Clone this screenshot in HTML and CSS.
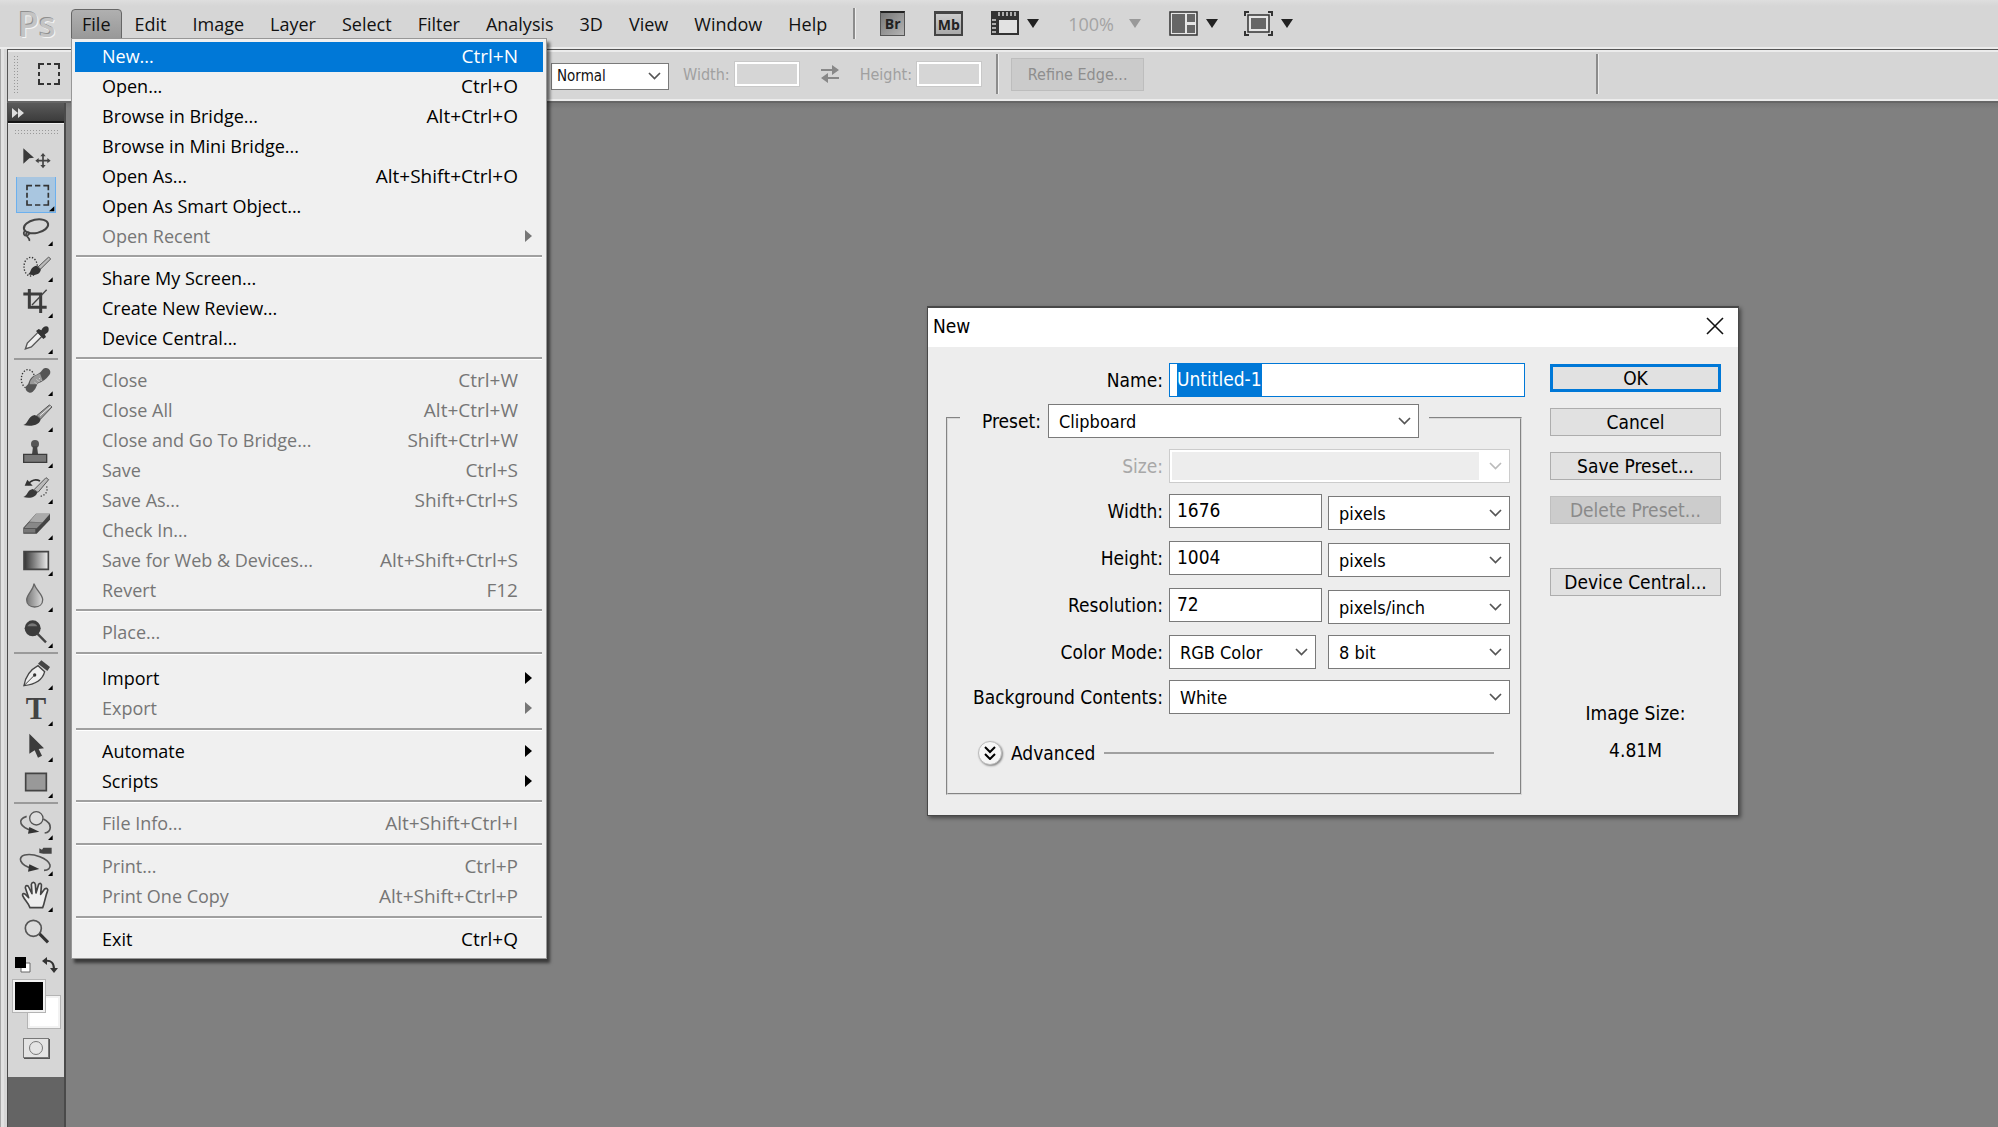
FILE: index.html
```html
<!DOCTYPE html>
<html lang="en">
<head>
<meta charset="utf-8">
<title>Ps</title>
<link rel="stylesheet" href="styles.css">
</head>
<body>
<div class="app">
  <header class="menubar">
    <div class="logo">Ps</div>
    <nav class="menus">
      <button class="menu-title open">File</button>
      <button class="menu-title">Edit</button>
      <button class="menu-title">Image</button>
      <button class="menu-title">Layer</button>
      <button class="menu-title">Select</button>
      <button class="menu-title">Filter</button>
      <button class="menu-title">Analysis</button>
      <button class="menu-title">3D</button>
      <button class="menu-title">View</button>
      <button class="menu-title">Window</button>
      <button class="menu-title">Help</button>
    </nav>
    <span class="bar-line"></span>
    <div class="app-buttons">
      <button class="badge bridge">Br</button>
      <button class="badge mini">Mb</button>
      <button class="drop">
        <svg width="28" height="25" viewBox="0 0 28 25"><path d="M0 0H28V24H0z" fill="#333"/><path d="M8 9H26V22H8z" fill="#e2e2e2"/><path d="M8 1v4M12 1v4M16 1v4M20 1v4M24 1v4M1 9h4M1 13h4M1 17h4M1 21h4" stroke="#d6d6d6" stroke-width="1.5"/></svg>
        <span class="tri"></span>
      </button>
      <button class="drop zoom" disabled>100% <span class="tri"></span></button>
      <button class="drop">
        <svg width="29" height="25" viewBox="0 0 29 25"><path d="M1 1H28V24H1z" fill="#e6e6e6" stroke="#333" stroke-width="1.5"/><path d="M3 3H16V22H3zM18 3H26V11H18zM18 14H26V22H18z" fill="#666"/></svg>
        <span class="tri"></span>
      </button>
      <button class="drop">
        <svg width="29" height="25" viewBox="0 0 29 25"><path d="M1 5V1H5M24 1H28V5M28 20V24H24M5 24H1V20" fill="none" stroke="#333" stroke-width="2"/><path d="M4 4H25V21H4z" fill="#e6e6e6" stroke="#333" stroke-width="1.5"/><path d="M7 7H22V18H7z" fill="#666"/></svg>
        <span class="tri"></span>
      </button>
    </div>
  </header>

  <div class="options">
    <span class="grip-v"></span>
    <div class="current-tool">
      <svg width="24" height="24" viewBox="0 0 24 24"><path d="M2 7V2H7M10 2H14M17 2H22V7M22 10V14M22 17V22H17M14 22H10M7 22H2V17M2 14V10" fill="none" stroke="#333" stroke-width="2"/></svg>
    </div>
    <select class="style-select" aria-label="Style"><option>Normal</option></select>
    <label class="opt-label" for="opt-w">Width:</label>
    <input class="opt-input" id="opt-w" type="text" disabled>
    <svg class="swap" width="20" height="18" viewBox="0 0 20 18"><path d="M1 5H14M6 13H19" stroke="#888" stroke-width="2"/><path d="M12 0L19 5L12 10zM8 8L1 13L8 18z" fill="#888"/></svg>
    <label class="opt-label" for="opt-h">Height:</label>
    <input class="opt-input" id="opt-h" type="text" disabled>
    <span class="bar-line"></span>
    <button class="refine" disabled>Refine Edge...</button>
    <span class="bar-line far"></span>
  </div>

  <div class="workspace">
    <aside class="dock">
      <div class="dock-head"><svg width="12" height="10" viewBox="0 0 12 10"><path d="M0 0L6 5L0 10zM6 0L12 5L6 10z" fill="#ddd"/></svg></div>
      <div class="tools">
        <span class="grip-h"></span>
        <div class="group">
          <button class="tool" aria-label="Move"><svg viewBox="0 0 120 108"><path d="M22 22L54 50L40 52L22 68z" fill="#3a3a3a"/><path d="M81 42V76M64 59H98" stroke="#444" stroke-width="5"/><path d="M81 36L89 46H73zM81 82L89 72H73zM58 59L68 51V67zM104 59L94 51V67z" fill="#444"/></svg></button>
          <button class="tool active" aria-label="Marquee"><svg viewBox="0 0 120 108"><path d="M33 40V26H48M57 26H73M82 26H97V40M97 47V62M97 70V84H82M73 84H57M48 84H33V70M33 62V47" fill="none" stroke="#333" stroke-width="5"/><path d="M115 88V103H99z"/></svg></button>
          <button class="tool" aria-label="Lasso"><svg viewBox="0 0 120 108"><ellipse cx="60" cy="40" rx="37" ry="20" transform="rotate(-12 60 40)" fill="none" stroke="#444" stroke-width="6"/><path d="M28 52C18 62 26 72 36 66C48 58 30 54 30 64C30 72 42 72 40 84" fill="none" stroke="#444" stroke-width="5"/><path d="M110 85V99H96z"/></svg></button>
          <button class="tool" aria-label="Quick selection"><svg viewBox="0 0 120 108"><ellipse cx="44" cy="53" rx="20" ry="28" fill="none" stroke="#333" stroke-width="4" stroke-dasharray="4 5"/><path d="M36 76C46 70 42 54 60 50L74 56C78 74 58 82 36 76z" fill="#333"/><path d="M66 54L98 24L104 30L74 60z" fill="#bbb" stroke="#555" stroke-width="3"/><path d="M110 85V99H96z"/></svg></button>
          <button class="tool" aria-label="Crop"><svg viewBox="0 0 120 108"><path d="M40 12V67H92M22 27H74V84" fill="none" stroke="#3c3c3c" stroke-width="9"/><path d="M48 60L92 14" stroke="#444" stroke-width="4"/><path d="M110 85V99H96z"/></svg></button>
          <button class="tool" aria-label="Eyedropper"><svg viewBox="0 0 120 108"><path d="M28 84L34 66L66 34L78 46L46 78z" fill="#eee" stroke="#555" stroke-width="4"/><path d="M60 30L68 24L76 28C82 12 100 12 98 26C98 36 88 38 86 40L90 48L82 54z" fill="#333"/><path d="M110 85V99H96z"/></svg></button>
        </div>
        <div class="group">
          <button class="tool" aria-label="Healing brush"><svg viewBox="0 0 120 108"><ellipse cx="36" cy="48" rx="20" ry="28" fill="none" stroke="#333" stroke-width="4" stroke-dasharray="4 5"/><path d="M42 76C54 66 48 56 60 50C74 46 80 42 90 28" fill="none" stroke="#555" stroke-width="26" stroke-linecap="round"/><path d="M52 64C52 54 60 48 76 42" fill="none" stroke="#999" stroke-width="22"/><path d="M56 58L64 64M62 50L70 56M70 46L76 52" stroke="#eee" stroke-width="3" stroke-dasharray="3 4"/><path d="M110 85V99H96z"/></svg></button>
          <button class="tool" aria-label="Brush"><svg viewBox="0 0 120 108"><path d="M22 78C38 74 34 52 56 48L74 56C76 78 46 84 22 78z" fill="#383838"/><path d="M62 50L100 18L108 24L74 60z" fill="#999" stroke="#555" stroke-width="3"/><path d="M72 50L104 22" stroke="#eee" stroke-width="3"/><path d="M110 85V99H96z"/></svg></button>
          <button class="tool" aria-label="Clone stamp"><svg viewBox="0 0 120 108"><circle cx="57" cy="27" r="12" fill="#555"/><path d="M51 34H63L66 58H48z" fill="#444"/><path d="M23 58H92V82H23z" fill="#777" stroke="#3c3c3c" stroke-width="4"/><path d="M110 85V99H96z"/></svg></button>
          <button class="tool" aria-label="History brush"><svg viewBox="0 0 120 108"><path d="M22 78C36 74 32 58 50 54L64 62C62 78 42 84 22 78z" fill="#383838"/><path d="M54 56L90 20L98 26L66 64z" fill="#bbb" stroke="#555" stroke-width="3"/><path d="M36 42C44 26 60 24 72 30" fill="none" stroke="#333" stroke-width="5"/><path d="M26 44L34 26L50 44z" fill="#333"/><path d="M92 46C96 60 90 72 74 76" fill="none" stroke="#444" stroke-width="4" stroke-dasharray="4 5"/><path d="M110 85V99H96z"/></svg></button>
          <button class="tool" aria-label="Eraser"><svg viewBox="0 0 120 108"><path d="M22 62L60 20H102V38L62 80H22z" fill="#444"/><path d="M40 44L60 20H102L80 46z" fill="#aaa"/><path d="M24 64L40 46H80L62 64z" fill="#888"/><path d="M24 66H58V77H24z" fill="#777"/><path d="M110 85V99H96z"/></svg></button>
          <button class="tool" aria-label="Gradient"><svg viewBox="0 0 120 108"><defs><linearGradient id="g1"><stop offset="0" stop-color="#333"/><stop offset="1" stop-color="#eee"/></linearGradient></defs><path d="M24 26H97V79H24z" fill="url(#g1)" stroke="#444" stroke-width="5"/><path d="M110 85V99H96z"/></svg></button>
          <button class="tool" aria-label="Blur"><svg viewBox="0 0 120 108"><defs><linearGradient id="g2"><stop offset="0" stop-color="#777"/><stop offset="1" stop-color="#ddd"/></linearGradient></defs><path d="M54 14C60 34 80 46 80 62C80 76 70 84 56 84C42 84 32 76 32 62C32 46 52 34 54 14z" fill="url(#g2)" stroke="#666" stroke-width="4"/><path d="M110 85V99H96z"/></svg></button>
          <button class="tool" aria-label="Dodge"><svg viewBox="0 0 120 108"><circle cx="50" cy="40" r="24" fill="#3c3c3c"/><path d="M64 56L90 82" stroke="#444" stroke-width="7"/><path d="M34 34C40 22 58 22 64 34z" fill="#777"/><path d="M110 85V99H96z"/></svg></button>
        </div>
        <div class="group">
          <button class="tool" aria-label="Pen"><svg viewBox="0 0 120 108"><path d="M24 86C28 60 40 40 66 26L86 44C80 68 62 82 24 86z" fill="#eee" stroke="#444" stroke-width="4"/><path d="M24 86L54 56" stroke="#444" stroke-width="3"/><circle cx="56" cy="54" r="5" fill="#333"/><path d="M66 20L76 10L102 30L94 42z" fill="#444"/><path d="M110 85V99H96z"/></svg></button>
          <button class="tool" aria-label="Type"><svg viewBox="0 0 120 108"><text x="60" y="79" class="type-glyph">T</text><path d="M110 85V99H96z"/></svg></button>
          <button class="tool" aria-label="Path selection"><svg viewBox="0 0 120 108"><path d="M40 14L84 58L68 60L78 80L66 86L56 64L40 74z" fill="#3c3c3c"/><path d="M110 85V99H96z"/></svg></button>
          <button class="tool" aria-label="Rectangle"><svg viewBox="0 0 120 108"><path d="M29 25H91V77H29z" fill="#999" stroke="#444" stroke-width="5"/><path d="M110 85V99H96z"/></svg></button>
        </div>
        <div class="group">
          <button class="tool" aria-label="3D rotate"><svg viewBox="0 0 120 108"><path d="M32 28C0 38 14 62 48 70M82 36C114 52 104 76 86 78" fill="none" stroke="#555" stroke-width="5"/><path d="M40 60L70 74L36 80z" fill="#333"/><circle cx="61" cy="34" r="20" fill="#ddd" stroke="#555" stroke-width="4"/><path d="M110 85V99H96z"/></svg></button>
          <button class="tool" aria-label="3D camera"><svg viewBox="0 0 120 108"><path d="M48 76C10 66 4 42 26 36C52 30 96 46 102 66C104 76 96 82 84 82" fill="none" stroke="#555" stroke-width="5"/><path d="M40 64L70 78L36 86z" fill="#333"/><path d="M82 14H107V32H82L70 30V16L78 20z" fill="#444"/><path d="M110 85V99H96z"/></svg></button>
          <button class="tool" aria-label="Hand"><svg viewBox="0 0 120 108"><path d="M42 86C38 72 26 64 20 50C18 42 26 42 30 48L38 56L28 26C28 18 36 18 38 24L48 44L46 16C48 8 56 8 58 16L60 42L68 16C72 10 78 14 76 22L74 46L86 30C92 26 98 30 94 38C88 52 86 72 80 86z" fill="#eee" stroke="#444" stroke-width="5" stroke-linejoin="round"/><path d="M110 85V99H96z"/></svg></button>
          <button class="tool" aria-label="Zoom"><svg viewBox="0 0 120 108"><path d="M70 56L96 82" stroke="#333" stroke-width="9"/><circle cx="52" cy="40" r="24" fill="#ddd" stroke="#555" stroke-width="5"/></svg></button>
        </div>
        <div class="color-mini">
          <svg width="16" height="16" viewBox="0 0 16 16"><path d="M6 6H15V15H6z" fill="#fff" stroke="#666"/><path d="M0 0H11V11H0z" fill="#000"/></svg>
          <svg width="16" height="16" viewBox="0 0 16 16"><path d="M3 4C9 3 12 6 12 12" fill="none" stroke="#333" stroke-width="2"/><path d="M0 4L5 0V8zM8 11H16L12 16z" fill="#333"/></svg>
        </div>
        <div class="swatches"><span class="back"></span><span class="fore"></span></div>
        <button class="mask" aria-label="Quick mask"><span class="ring"></span></button>
      </div>
    </aside>
    <main class="canvas"></main>
  </div>

  <ul class="popup">
    <li><button class="item hot">New...<kbd>Ctrl+N</kbd></button></li>
    <li><button class="item">Open...<kbd>Ctrl+O</kbd></button></li>
    <li><button class="item">Browse in Bridge...<kbd>Alt+Ctrl+O</kbd></button></li>
    <li><button class="item">Browse in Mini Bridge...</button></li>
    <li><button class="item">Open As...<kbd>Alt+Shift+Ctrl+O</kbd></button></li>
    <li><button class="item">Open As Smart Object...</button></li>
    <li><button class="item sub" disabled>Open Recent</button></li>
    <li class="sep tight"></li>
    <li><button class="item">Share My Screen...</button></li>
    <li><button class="item">Create New Review...</button></li>
    <li><button class="item">Device Central...</button></li>
    <li class="sep tight"></li>
    <li><button class="item" disabled>Close<kbd>Ctrl+W</kbd></button></li>
    <li><button class="item" disabled>Close All<kbd>Alt+Ctrl+W</kbd></button></li>
    <li><button class="item" disabled>Close and Go To Bridge...<kbd>Shift+Ctrl+W</kbd></button></li>
    <li><button class="item" disabled>Save<kbd>Ctrl+S</kbd></button></li>
    <li><button class="item" disabled>Save As...<kbd>Shift+Ctrl+S</kbd></button></li>
    <li><button class="item" disabled>Check In...</button></li>
    <li><button class="item" disabled>Save for Web &amp; Devices...<kbd>Alt+Shift+Ctrl+S</kbd></button></li>
    <li><button class="item" disabled>Revert<kbd>F12</kbd></button></li>
    <li class="sep tight"></li>
    <li><button class="item" disabled>Place...</button></li>
    <li class="sep loose"></li>
    <li><button class="item sub">Import</button></li>
    <li><button class="item sub" disabled>Export</button></li>
    <li class="sep"></li>
    <li><button class="item sub">Automate</button></li>
    <li><button class="item sub">Scripts</button></li>
    <li class="sep tight"></li>
    <li><button class="item" disabled>File Info...<kbd>Alt+Shift+Ctrl+I</kbd></button></li>
    <li class="sep"></li>
    <li><button class="item" disabled>Print...<kbd>Ctrl+P</kbd></button></li>
    <li><button class="item" disabled>Print One Copy<kbd>Alt+Shift+Ctrl+P</kbd></button></li>
    <li class="sep"></li>
    <li><button class="item">Exit<kbd>Ctrl+Q</kbd></button></li>
  </ul>

  <form class="dialog" onsubmit="return false">
    <div class="dialog-title">New
      <button type="button" class="close" aria-label="Close"><svg width="18" height="18" viewBox="0 0 18 18"><path d="M1 1L17 17M17 1L1 17" stroke="#111" stroke-width="1.6"/></svg></button>
    </div>
    <div class="dialog-body">
      <div class="fields">
        <div class="row name-row">
          <label for="f-name">Name:</label>
          <input class="box focus" id="f-name" type="text" value="Untitled-1" autofocus>
        </div>
        <fieldset class="preset">
          <legend><label for="f-preset">Preset:</label><select class="box" id="f-preset"><option>Clipboard</option></select></legend>
          <div class="rows">
            <div class="row"><label class="off" for="f-size">Size:</label><select class="box" id="f-size" disabled></select></div>
            <div class="row"><label for="f-w">Width:</label><div class="pair"><input class="box num" id="f-w" type="text" value="1676"><select class="box unit" aria-label="Width unit"><option>pixels</option></select></div></div>
            <div class="row"><label for="f-h">Height:</label><div class="pair"><input class="box num" id="f-h" type="text" value="1004"><select class="box unit" aria-label="Height unit"><option>pixels</option></select></div></div>
            <div class="row"><label for="f-r">Resolution:</label><div class="pair"><input class="box num" id="f-r" type="text" value="72"><select class="box unit" aria-label="Resolution unit"><option>pixels/inch</option></select></div></div>
            <div class="row"><label for="f-mode">Color Mode:</label><div class="pair flat"><select class="box mode" id="f-mode"><option>RGB Color</option></select><select class="box unit" aria-label="Bit depth"><option>8 bit</option></select></div></div>
            <div class="row"><label for="f-bg">Background Contents:</label><select class="box" id="f-bg"><option>White</option></select></div>
          </div>
          <div class="advanced">
            <button type="button" class="expand" id="f-adv" aria-label="Advanced"><svg width="12" height="14" viewBox="0 0 12 14"><path d="M1 1L6 6L11 1M1 8L6 13L11 8" fill="none" stroke="#000" stroke-width="2"/></svg></button>
            <span>Advanced</span>
            <span class="rule"></span>
          </div>
        </fieldset>
      </div>
      <div class="side">
        <button class="btn primary">OK</button>
        <button type="button" class="btn">Cancel</button>
        <button type="button" class="btn">Save Preset...</button>
        <button type="button" class="btn" disabled>Delete Preset...</button>
        <button type="button" class="btn device">Device Central...</button>
        <div class="size-info"><span>Image Size:</span><span>4.81M</span></div>
      </div>
    </div>
  </form>
</div>
<script src="app.js"></script>
</body>
</html>
```
FILE: styles.css
```css
* { box-sizing: border-box; }

body {
  margin: 0;
  background: #808080;
  color: #111;
  font-family: "Open Sans", sans-serif;
  font-size: 18px;
}

button, input, select, kbd { font: inherit; color: inherit; }
button { border: 0; padding: 0; background: none; }

.app {
  position: relative;
  display: flex;
  flex-direction: column;
  min-height: 100vh;
  padding-left: 7px;
  background: #d6d6d6;
  box-shadow: inset 1px 0 #a8a8a8, inset 4px 0 #e2e2e2;
}

/* Menu bar */
.menubar {
  display: flex;
  align-items: center;
  height: 49px;
  margin-left: -7px;
  padding-left: 18px;
  background: linear-gradient(#dedede, #d6d6d6 6px);
  border-bottom: 2px solid #ececec;
}
.logo {
  width: 53px;
  font-size: 34px;
  font-weight: 600;
  line-height: 44px;
  color: #c4c4c4;
  text-shadow: -1px -1px #8f8f8f, 1px 1px #f4f4f4;
}
.menus { display: flex; align-self: flex-end; height: 38px; }
.menu-title { padding: 0 12px; line-height: 29px; padding-bottom: 7px; border: 1px solid transparent; }
.menu-title.open {
  padding: 0 10px 7px;
  border-color: #666;
  border-radius: 4px 4px 0 0;
  background: linear-gradient(#b0b0b0, #929292);
}
.bar-line {
  width: 2px;
  height: 31px;
  background: #8c8c8c;
  box-shadow: 1px 0 #eee;
}
.menubar .bar-line { margin-left: 13px; }
.app-buttons { display: flex; align-items: center; margin-left: 25px; }
.badge {
  height: 25px;
  font-family: "Open Sans", sans-serif;
  font-size: 14px;
  font-weight: 700;
  line-height: 22px;
  border: 1px solid #555;
  color: #222;
}
.bridge { width: 25px; background: linear-gradient(135deg, #777, #b4b4b4); margin-right: 29px; border-top: 2px solid #222; }
.mini { width: 29px; background: linear-gradient(#ccc, #aaa); border: 2px solid #444; border-top-width: 3px; margin-right: 28px; line-height: 19px; }
.drop { display: flex; align-items: center; gap: 8px; margin-right: 26px; }
.tri { border: 6px solid transparent; border-top: 9px solid #222; border-bottom: 0; }
.zoom { margin: 0 28px 0 3px; font-size: 18px; color: #a4a4a4; gap: 15px; }
.zoom .tri { border-top-color: #999; }

/* Tool options */
.options {
  display: flex;
  align-items: center;
  height: 54px;
  padding: 0 0 3px 5px;
  border-top: 1px solid #555;
  border-left: 1px solid #555;
  border-bottom: 2px solid #666;
  box-shadow: inset 0 2px #ececec, inset 0 -2px #ececec;
  font-family: "DejaVu Sans Condensed", "DejaVu Sans", sans-serif;
  font-size: 16px;
}
.grip-v {
  width: 6px;
  height: 38px;
  background: radial-gradient(circle, #999 1px, transparent 1px) 0 0 / 3px 3px;
}
.current-tool { width: 532px; padding: 4px 0 0 18px; }
.style-select, .box {
  appearance: none;
  border: 1px solid #7a7a7a;
  border-radius: 0;
  background: #fff;
  outline: 0;
}
select.style-select, select.box {
  background: #fff url("data:image/svg+xml,%3Csvg xmlns='http://www.w3.org/2000/svg' width='13' height='8'%3E%3Cpath d='M1 1L6.500 6.500L12 1' fill='none' stroke='%23555' stroke-width='1.700'/%3E%3C/svg%3E") no-repeat right 7px center;
}
.style-select { width: 118px; height: 27px; margin-top: 4px; padding: 0 5px; color: #111; font-size: 15px; }
.opt-label { margin-left: 14px; color: #a0a0a0; }
.opt-input { width: 64px; height: 24px; margin-left: 5px; border: 2px solid #fff; background: #d6d6d6; outline: 1px solid #c8c8c8; }
.swap { margin: 0 6px 0 21px; }
.options .bar-line { height: 40px; margin: 0 13px 0 15px; }
.refine { width: 133px; height: 33px; border: 1px solid #bdbdbd; background: #cbcbcb; color: #8e8e8e; }
.options .far { margin-left: 452px; }

/* Tools */
.workspace { flex: 1; display: flex; align-items: stretch; }
.dock { width: 59px; border: solid #4a4a4a; border-width: 0 2px 0 1px; background: #646464; }
.dock-head { height: 20px; padding: 0 4px; line-height: 16px; background: linear-gradient(#5a5a5a, #3c3c3c); border-bottom: 2px solid #161616; }
.tools { display: flex; flex-direction: column; align-items: center; height: 954px; padding-top: 5px; background: #d6d6d6; border-top: 1px solid #f0f0f0; }
.grip-h { width: 44px; height: 6px; margin-bottom: 6px; background: radial-gradient(circle, #999 1px, transparent 1px) 0 0 / 3px 3px; }
.group { display: flex; flex-direction: column; }
.group + .group { border-top: 2px solid #9a9a9a; margin-top: 1px; padding: 3px 2px 0; }
.tool { display: block; width: 40px; height: 36px; }
.tool svg { display: block; width: 40px; height: 36px; overflow: visible; }
.tool.active { background: #a9c6e0; box-shadow: inset 1px 0 #6cb0ee, inset -1px 0 #6cb0ee, inset 0 -1px #6cb0ee; }
.type-glyph { font-family: "Liberation Serif", serif; font-size: 92px; font-weight: 700; text-anchor: middle; fill: #444; }
.color-mini { display: flex; gap: 11px; margin-top: 6px; }
.swatches { position: relative; width: 47px; height: 48px; margin-top: 7px; }
.fore, .back { position: absolute; width: 32px; height: 32px; border: 2px solid #f2f2f2; outline: 1px solid #b4b4b4; background: #000; left: 0; top: 0; }
.back { left: 15px; top: 16px; background: #fff; }
.mask { display: grid; place-items: center; width: 26px; height: 20px; margin-top: 10px; border: 1px solid #777; box-shadow: 1px 1px #555; background: #e4e4e4; }
.ring { width: 14px; height: 14px; border: 1px solid #777; border-radius: 50%; }
.canvas { flex: 1; background: linear-gradient(#767676, #808080 6px); }

/* File menu */
.popup {
  position: absolute;
  left: 71px;
  top: 38px;
  width: 476px;
  margin: 0;
  padding: 3px;
  list-style: none;
  border: 1px solid #979797;
  background: #f0f0f0;
  box-shadow: 3px 4px 3px rgba(0, 0, 0, .55);
}
.item {
  display: flex;
  align-items: center;
  justify-content: space-between;
  width: 100%;
  height: 30px;
  padding: 0 25px 2px 27px;
  color: #000;
}
.item kbd { font-size: 19px; line-height: 24px; }
.item:disabled { color: #767676; }
.item.hot { background: #0078d7; color: #fff; }
.item.sub { padding-right: 11px; }
.item.sub::after { content: ""; border: 6px solid transparent; border-left: 7px solid; border-right: 0; }
.sep { height: 13px; padding: 4px 1px 0; }
.sep::before { content: ""; display: block; height: 2px; background: #a0a0a0; border-bottom: 1px solid #fff; }
.sep.tight { height: 12px; padding-top: 3px; }
.sep.loose { height: 16px; }

/* New document dialog */
.dialog {
  position: absolute;
  left: 927px;
  top: 306px;
  width: 812px;
  border: 1px solid #484848;
  border-top-width: 2px;
  background: #ededed;
  box-shadow: 2px 2px 4px rgba(0, 0, 0, .45);
  font-family: "DejaVu Sans Condensed", "DejaVu Sans", sans-serif;
  font-size: 19px;
  color: #000;
}
.dialog-title { display: flex; align-items: center; justify-content: space-between; height: 39px; padding: 0 14px 3px 5px; background: #fff; }
.close { height: 18px; line-height: 0; }
.dialog-body { display: flex; gap: 25px; padding: 16px 17px 20px 18px; }
.fields { flex: 1; }
.row { display: grid; grid-template-columns: 215px 1fr; gap: 6px; text-align: right; line-height: 34px; }
.name-row { grid-template-columns: 217px 1fr; }
.box { width: 100%; height: 34px; padding: 0 7px 2px; }
select.box { padding: 0 10px; font-size: 18px; }
.box.focus { border-color: #0078d7; }
.box::selection { background: #0078d7; color: #fff; }
.preset { margin: 0 3px 0 0; padding: 0 10px 27px 0; min-width: 0; border: 2px groove #d8d8d8; }
.preset legend { display: flex; gap: 7px; width: 469px; margin-left: 12px; padding: 7px 10px 0 22px; line-height: 34px; }
.preset legend .box { flex: 1; }
.rows { display: grid; gap: 11px; padding-top: 11px; }
.off { color: #a8a8a8; }
.pair { display: flex; justify-content: space-between; height: 36px; }
.pair.flat { height: 34px; }
.num { width: 153px; }
.unit { width: 182px; align-self: flex-end; }
.mode { width: 147px; }
select.box:disabled {
  opacity: 1;
  border-color: #ccc;
  box-shadow: inset 0 0 0 2px #fff;
  background-color: #ededed;
  background-image: url("data:image/svg+xml,%3Csvg xmlns='http://www.w3.org/2000/svg' width='13' height='8'%3E%3Cpath d='M1 1L6.500 6.500L12 1' fill='none' stroke='%23bbb' stroke-width='1.700'/%3E%3C/svg%3E"), linear-gradient(#fff, #fff);
  background-position: right 7px center, right;
  background-size: auto, 30px 100%;
}
.advanced { display: flex; align-items: center; gap: 9px; height: 26px; margin: 26px 16px 0 30px; }
.expand { display: grid; place-items: center; width: 24px; height: 24px; border-radius: 50%; background: #f6f6f6; border: 1px solid #bbb; box-shadow: 1px 1px 2px #888; }
.rule { flex: 1; height: 2px; background: #a0a0a0; }
.side { display: flex; flex-direction: column; gap: 16px; width: 171px; padding-top: 1px; }
.btn { height: 28px; line-height: 26px; border: 1px solid #adadad; background: #e1e1e1; }
.btn.primary { border: 3px solid #0078d7; line-height: 22px; }
.btn:disabled { background: #ccc; border-color: #bfbfbf; color: #8a8a8a; }
.device { margin-top: 28px; }
.size-info { display: flex; flex-direction: column; gap: 15px; align-items: center; margin-top: 90px; line-height: 22px; }
```
FILE: app.js
```
// Opens the dialog with the document name ready to be overwritten.
const nameBox = document.getElementById('f-name');
nameBox.focus();
nameBox.select();
```
